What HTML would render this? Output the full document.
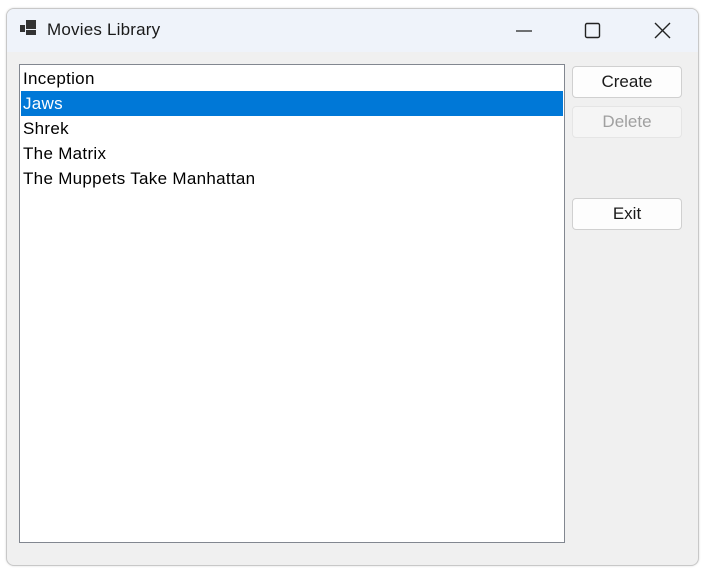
<!DOCTYPE html>
<html><head><style>
*{margin:0;padding:0;box-sizing:border-box}
body{width:703px;height:571px;background:#fff;position:relative;overflow:hidden;font-family:"Segoe UI","Liberation Sans",sans-serif}
.win{position:absolute;left:6px;top:8px;width:693px;height:558px;border:1px solid #c8c8c8;border-radius:8px;background:#f0f0f0;overflow:hidden;box-shadow:0 0 2px rgba(0,0,0,.15)}
.tb{position:absolute;left:0;top:0;width:100%;height:43px;background:#eff3fa}
.title{position:absolute;left:40px;top:11px;font-size:17px;color:#1a1a1a;letter-spacing:0.2px}
.list{position:absolute;left:12px;top:55px;width:546px;height:479px;background:#fff;border:1px solid #828790}
.it{position:absolute;left:3px;height:25px;line-height:25px;font-size:17px;color:#000;letter-spacing:0.3px}
.sel{left:1px;width:542px;background:#0078d7;color:#fff;padding-left:2px}
.btn{position:absolute;left:565px;width:110px;height:32px;border:1px solid #d0d0d0;border-radius:4px;background:#fdfdfd;font-size:17px;text-align:center;line-height:29px;color:#1a1a1a}
.dis{background:#f5f5f5;color:#a0a0a0;border-color:#e5e5e5}
</style></head><body>
<div class="win">
<div class="tb">
<svg style="position:absolute;left:13px;top:11px" width="18" height="16"><rect x="0" y="5" width="5" height="7" fill="#333"/><rect x="6" y="0" width="10" height="9" fill="#333"/><rect x="6" y="10" width="10" height="5" fill="#333"/></svg>
<div class="title">Movies Library</div>
<svg style="position:absolute;left:507px;top:12px" width="20" height="20"><line x1="2" y1="10" x2="18" y2="10" stroke="#222" stroke-width="1.3"/></svg>
<svg style="position:absolute;left:576px;top:12px" width="20" height="20"><rect x="2.5" y="2.5" width="14" height="14" rx="1.5" fill="none" stroke="#222" stroke-width="1.4"/></svg>
<svg style="position:absolute;left:646px;top:12px" width="20" height="20"><path d="M2 2L17 17M17 2L2 17" stroke="#222" stroke-width="1.4"/></svg>
</div>
<div class="list">
<div class="it" style="top:1px">Inception</div>
<div class="it sel" style="top:26px">Jaws</div>
<div class="it" style="top:51px">Shrek</div>
<div class="it" style="top:76px">The Matrix</div>
<div class="it" style="top:101px">The Muppets Take Manhattan</div>
</div>
<div class="btn" style="top:57px">Create</div>
<div class="btn dis" style="top:97px">Delete</div>
<div class="btn" style="top:189px">Exit</div>
</div>
</body></html>
